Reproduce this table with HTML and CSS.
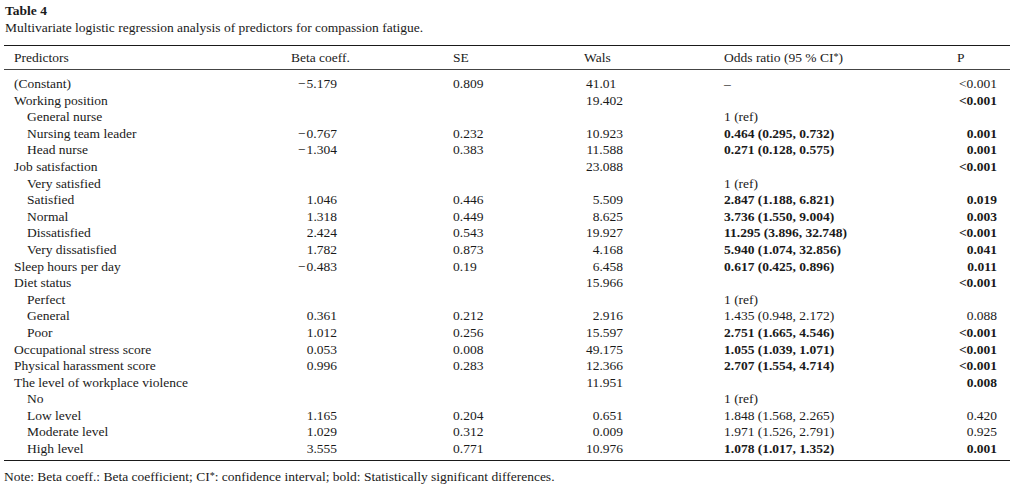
FILE: index.html
```html
<!DOCTYPE html>
<html>
<head>
<meta charset="utf-8">
<link rel="stylesheet" href="styles.css">
</head>
<body>
<div class="page">
  <div class="title">Table 4</div>
  <div class="caption">Multivariate logistic regression analysis of predictors for compassion fatigue.</div>
  <table class="tbl">
    <colgroup>
      <col class="w-pred"><col class="w-beta"><col class="w-se"><col class="w-wals"><col class="w-or"><col class="w-p">
    </colgroup>
    <thead>
      <tr>
        <th class="pred">Predictors</th>
        <th>Beta coeff.</th>
        <th>SE</th>
        <th>Wals</th>
        <th>Odds ratio (95 % CI<span class="ast">*</span>)</th>
        <th>P</th>
      </tr>
    </thead>
    <tbody>
      <tr class="first"><td class="pred">(Constant)</td><td><span class="num">−&#8202;5.179</span></td><td>0.809</td><td><span class="wal"><span class="dp2">41.01</span></span></td><td>–</td><td class="p">&lt;0.001</td></tr>
      <tr><td class="pred">Working position</td><td></td><td></td><td><span class="wal">19.402</span></td><td></td><td class="p b">&lt;0.001</td></tr>
      <tr><td class="pred sub">General nurse</td><td></td><td></td><td></td><td>1 (ref)</td><td class="p"></td></tr>
      <tr><td class="pred sub">Nursing team leader</td><td><span class="num">−&#8202;0.767</span></td><td>0.232</td><td><span class="wal">10.923</span></td><td class="b">0.464 (0.295, 0.732)</td><td class="p b">0.001</td></tr>
      <tr><td class="pred sub">Head nurse</td><td><span class="num">−&#8202;1.304</span></td><td>0.383</td><td><span class="wal">11.588</span></td><td class="b">0.271 (0.128, 0.575)</td><td class="p b">0.001</td></tr>
      <tr><td class="pred">Job satisfaction</td><td></td><td></td><td><span class="wal">23.088</span></td><td></td><td class="p b">&lt;0.001</td></tr>
      <tr><td class="pred sub">Very satisfied</td><td></td><td></td><td></td><td>1 (ref)</td><td class="p"></td></tr>
      <tr><td class="pred sub">Satisfied</td><td><span class="num">1.046</span></td><td>0.446</td><td><span class="wal">5.509</span></td><td class="b">2.847 (1.188, 6.821)</td><td class="p b">0.019</td></tr>
      <tr><td class="pred sub">Normal</td><td><span class="num">1.318</span></td><td>0.449</td><td><span class="wal">8.625</span></td><td class="b">3.736 (1.550, 9.004)</td><td class="p b">0.003</td></tr>
      <tr><td class="pred sub">Dissatisfied</td><td><span class="num">2.424</span></td><td>0.543</td><td><span class="wal">19.927</span></td><td class="b">11.295 (3.896, 32.748)</td><td class="p b">&lt;0.001</td></tr>
      <tr><td class="pred sub">Very dissatisfied</td><td><span class="num">1.782</span></td><td>0.873</td><td><span class="wal">4.168</span></td><td class="b">5.940 (1.074, 32.856)</td><td class="p b">0.041</td></tr>
      <tr><td class="pred">Sleep hours per day</td><td><span class="num">−&#8202;0.483</span></td><td>0.19</td><td><span class="wal">6.458</span></td><td class="b">0.617 (0.425, 0.896)</td><td class="p b">0.011</td></tr>
      <tr><td class="pred">Diet status</td><td></td><td></td><td><span class="wal">15.966</span></td><td></td><td class="p b">&lt;0.001</td></tr>
      <tr><td class="pred sub">Perfect</td><td></td><td></td><td></td><td>1 (ref)</td><td class="p"></td></tr>
      <tr><td class="pred sub">General</td><td><span class="num">0.361</span></td><td>0.212</td><td><span class="wal">2.916</span></td><td>1.435 (0.948, 2.172)</td><td class="p">0.088</td></tr>
      <tr><td class="pred sub">Poor</td><td><span class="num">1.012</span></td><td>0.256</td><td><span class="wal">15.597</span></td><td class="b">2.751 (1.665, 4.546)</td><td class="p b">&lt;0.001</td></tr>
      <tr><td class="pred">Occupational stress score</td><td><span class="num">0.053</span></td><td>0.008</td><td><span class="wal">49.175</span></td><td class="b">1.055 (1.039, 1.071)</td><td class="p b">&lt;0.001</td></tr>
      <tr><td class="pred">Physical harassment score</td><td><span class="num">0.996</span></td><td>0.283</td><td><span class="wal">12.366</span></td><td class="b">2.707 (1.554, 4.714)</td><td class="p b">&lt;0.001</td></tr>
      <tr><td class="pred">The level of workplace violence</td><td></td><td></td><td><span class="wal">11.951</span></td><td></td><td class="p b">0.008</td></tr>
      <tr><td class="pred sub">No</td><td></td><td></td><td></td><td>1 (ref)</td><td class="p"></td></tr>
      <tr><td class="pred sub">Low level</td><td><span class="num">1.165</span></td><td>0.204</td><td><span class="wal">0.651</span></td><td>1.848 (1.568, 2.265)</td><td class="p">0.420</td></tr>
      <tr><td class="pred sub">Moderate level</td><td><span class="num">1.029</span></td><td>0.312</td><td><span class="wal">0.009</span></td><td>1.971 (1.526, 2.791)</td><td class="p">0.925</td></tr>
      <tr class="last"><td class="pred sub">High level</td><td><span class="num">3.555</span></td><td>0.771</td><td><span class="wal">10.976</span></td><td class="b">1.078 (1.017, 1.352)</td><td class="p b">0.001</td></tr>
    </tbody>
  </table>
  <div class="note">Note: Beta coeff.: Beta coefficient; CI<span class="ast">*</span>: confidence interval; bold: Statistically significant differences.</div>
</div>
</body>
</html>
```

FILE: styles.css
```css
html, body {
  margin: 0;
  padding: 0;
  background: #fff;
}
.page {
  font-family: "Liberation Serif", "DejaVu Serif", serif;
  font-size: 13.5px;
  color: #1a1a1a;
  padding: 3px 0 0 4px;
  width: 1006px;
}
.title {
  font-weight: bold;
  line-height: 16px;
  padding-left: 1px;
}
.caption {
  line-height: 17px;
  padding-left: 1px;
}
.tbl {
  margin-top: 9px;
  width: 1006px;
  table-layout: fixed;
  border-collapse: collapse;
  border-top: 1px solid #1a1a1a;
  border-bottom: 1px solid #1a1a1a;
}
.w-pred { width: 287px; }
.w-beta { width: 162px; }
.w-se { width: 131px; }
.w-wals { width: 140px; }
.w-or { width: 233px; }
.w-p { width: 53px; }
.tbl th {
  font-weight: normal;
  text-align: left;
  height: 23px;
  padding: 0;
  line-height: 16px;
  border-bottom: 1px solid #444;
  white-space: nowrap;
}
.tbl td {
  padding: 0;
  line-height: 16.6px;
  height: 16.6px;
  white-space: nowrap;
  vertical-align: middle;
}
.tbl .pred { padding-left: 10px; }
.tbl .pred.sub { padding-left: 23px; }
.tbl tr.first td { padding-top: 6px; }
.tbl tr.last td { padding-bottom: 2px; }
.tbl td.p { text-align: right; padding-right: 13px; }
.b { font-weight: bold; }
.ast {
  font-size: 0.75em;
  vertical-align: 0.15em;
}
.num {
  display: inline-block;
  width: 46px;
  text-align: right;
}
.wal {
  display: inline-block;
  width: 39px;
  text-align: right;
}
.dp2 { padding-right: 0.5em; }
.note {
  line-height: 17px;
  padding-top: 6px;
  padding-left: 0;
}
```
